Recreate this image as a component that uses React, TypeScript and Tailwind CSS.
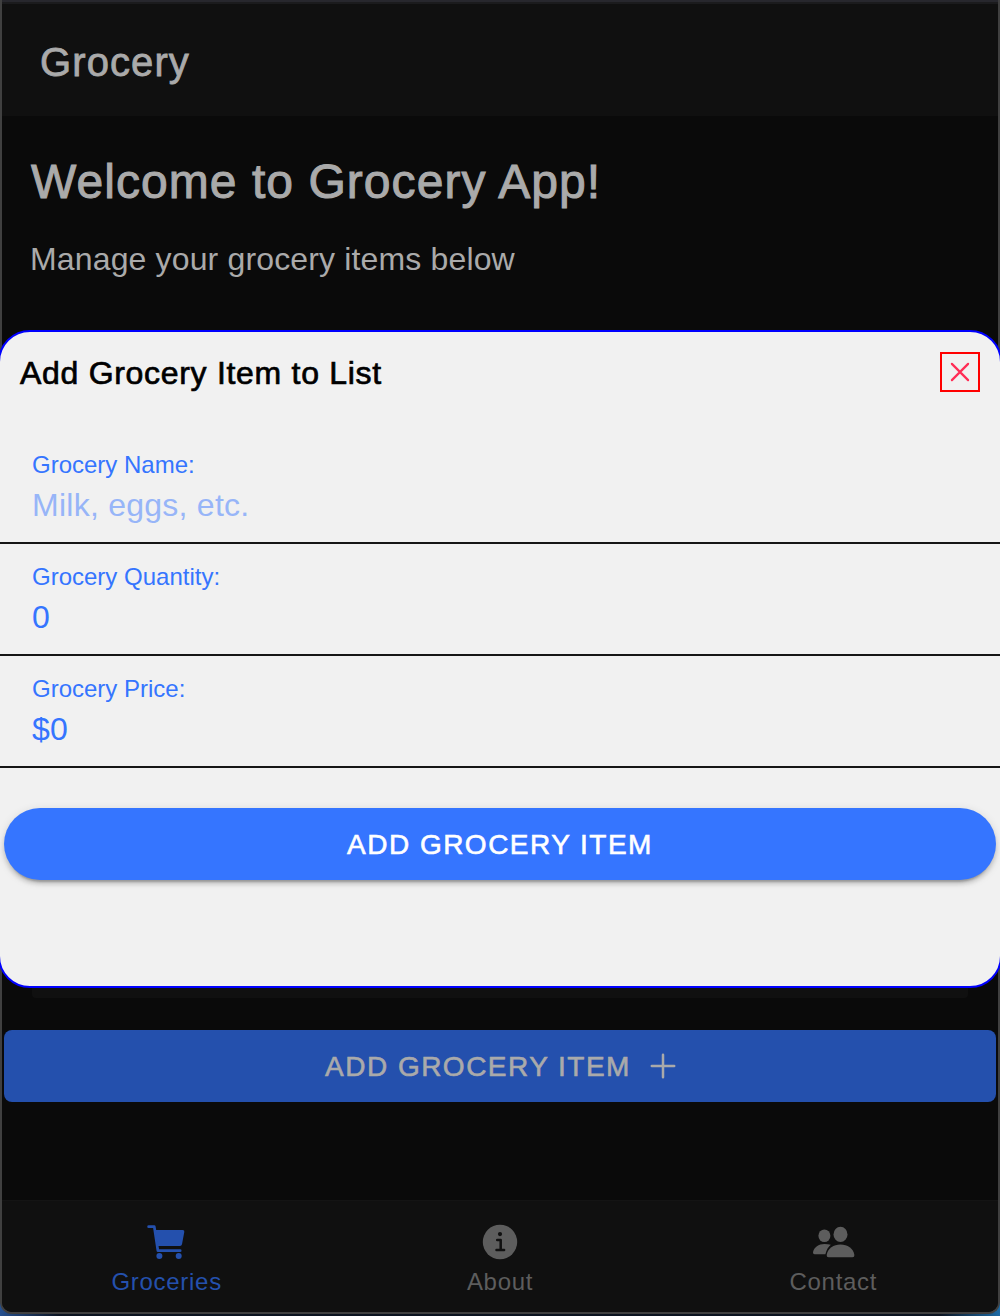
import React from "react";

function Field({ label, value, placeholder }: { label: string; value?: string; placeholder?: string }) {
  return (
    <label className="flex h-[112px] flex-col border-b-2 border-[#161616] pt-[19px] pl-8 text-[#3575ff]">
      <span className="h-[28px] text-[24px] leading-[28px]">{label}</span>
      <input
        className="mt-[5px] h-[42px] w-full bg-transparent p-0 text-[32px] leading-[42px] tracking-[0.25px] outline-none placeholder:text-[#97b5f8]"
        defaultValue={value}
        placeholder={placeholder}
      />
    </label>
  );
}

function CartIcon() {
  return (
    <svg width="44" height="44" viewBox="0 0 44 44" fill="currentColor">
      <path
        d="M3.6 6.7H9.3L12.9 30.7H35.2"
        fill="none"
        stroke="currentColor"
        strokeWidth="2.7"
        strokeLinecap="round"
        strokeLinejoin="round"
      />
      <path d="M9.8 10H37.7Q39.7 10 39.3 12L37 24.3Q36.6 26 35 26H13Z" />
      <circle cx="14.4" cy="35.9" r="3" />
      <circle cx="33.7" cy="35.9" r="3" />
    </svg>
  );
}

function InfoIcon() {
  return (
    <svg width="44" height="44" viewBox="0 0 44 44">
      <circle cx="22" cy="22" r="17.2" fill="currentColor" />
      <circle cx="22" cy="14.1" r="2.1" fill="#101010" />
      <path
        d="M19.2 19.9H22.7V29.9M18.5 29.9H26.1"
        fill="none"
        stroke="#101010"
        strokeWidth="2.5"
        strokeLinecap="round"
        strokeLinejoin="round"
      />
    </svg>
  );
}

function PeopleIcon() {
  return (
    <svg width="44" height="44" viewBox="0 0 44 44" fill="currentColor">
      <ellipse cx="13.4" cy="15.7" rx="6" ry="6.3" />
      <ellipse cx="29.5" cy="14.4" rx="7" ry="7.7" />
      <path d="M29.5 24.6C22.5 24.6 16.8 28.6 15.7 34.9Q15.5 37.3 17.5 37.3H41.5Q43.6 37.3 43.4 34.9C42.3 28.6 36.5 24.6 29.5 24.6Z" />
      <path d="M19.8 24.8C17.8 24.1 15.7 23.9 13.4 23.9C7.7 23.9 3 27.1 2 32.2Q1.8 34.3 3.7 34.3H14.4C15.4 29.8 17.4 26.9 19.8 24.8Z" />
    </svg>
  );
}

function Header() {
  return (
    <header className="flex h-[116px] items-center border-t-2 border-[#27272d] bg-[#101010] pt-[6px] pl-[38px] shadow-[inset_0_2px_0_#1b1b1d]">
      <span className="text-[40px] leading-[48px] tracking-[1.1px] [-webkit-text-stroke:0.8px_#aaaaaa]">Grocery</span>
    </header>
  );
}

function AddItemSheet() {
  return (
    <section className="absolute top-[330px] -left-[2px] h-[658px] w-[1004px] overflow-hidden rounded-[32px] border-2 border-[#0000ff] bg-[#f1f1f1]">
      <div className="flex h-[80px] items-center justify-between px-[20px]">
        <h2 className="pt-[2px] text-[32px] leading-[40px] tracking-[0.7px] text-black [-webkit-text-stroke:0.7px_#000]">
          Add Grocery Item to List
        </h2>
        <button className="flex size-[40px] items-center justify-center border-2 border-[#ff0000] text-[#ff2d55]">
          <svg width="36" height="36" viewBox="0 0 36 36">
            <path d="M9.9 9.9L26.1 26.1M26.1 9.9L9.9 26.1" stroke="currentColor" strokeWidth="2.2" strokeLinecap="round" />
          </svg>
        </button>
      </div>
      <div className="mt-[20px]">
        <Field label="Grocery Name:" placeholder="Milk, eggs, etc." />
        <Field label="Grocery Quantity:" value="0" />
        <Field label="Grocery Price:" value="$0" />
      </div>
      <button className="mx-[4px] mt-[40px] flex h-[72px] w-[992px] items-center justify-center rounded-full bg-[#3575ff] pt-[2px] text-[28px] tracking-[1.48px] text-white shadow-[0_6px_2px_-4px_rgba(0,0,0,0.2),0_4px_4px_0_rgba(0,0,0,0.14),0_2px_10px_0_rgba(0,0,0,0.12)] [-webkit-text-stroke:0.6px_#fff]">
        ADD GROCERY ITEM
      </button>
    </section>
  );
}

function Tab({ icon, label, color }: { icon: React.ReactNode; label: string; color: string }) {
  return (
    <div className={`flex flex-1 flex-col items-center pt-[19px] ${color}`}>
      {icon}
      <span className="mt-[2px] text-[24px] leading-[32px] tracking-[0.7px]">{label}</span>
    </div>
  );
}

export default function App() {
  return (
    <div className="relative h-[1316px] w-[1000px] overflow-hidden bg-[linear-gradient(90deg,#26508f,#0b1320_6%,#0b1320_94%,#1c6aa5)] font-['Liberation_Sans',Arial,sans-serif] text-[#aaaaaa]">
      <div className="flex h-[1314px] flex-col overflow-hidden rounded-b-[12px] border-x-2 border-b-2 border-[#404040] bg-[#0a0a0a]">
        <Header />
        <main className="flex flex-1 flex-col">
          <h1 className="mt-[37px] pl-[29px] text-[48px] leading-[58px] tracking-[1.05px] [-webkit-text-stroke:1px_#aaaaaa]">
            Welcome to Grocery App!
          </h1>
          <p className="mt-[28px] pl-[28px] text-[32px] leading-[40px] tracking-[0.15px]">
            Manage your grocery items below
          </p>
          <div className="mx-[30px] mt-[51px] h-[668px] shrink-0 rounded-[4px] bg-[#101010]" />
          <button className="mx-[2px] mt-[32px] flex h-[72px] items-center justify-center rounded-[8px] bg-[#2450ad] text-[28px] tracking-[1.48px] [-webkit-text-stroke:0.6px_#aaaaaa]">
            <span className="pt-[2px]">ADD GROCERY ITEM</span>
            <svg className="mr-[-8px] ml-[12px]" width="40" height="40" viewBox="0 0 40 40">
              <path d="M20 8.8V31.2M8.8 20H31.2" stroke="currentColor" strokeWidth="2.5" strokeLinecap="round" />
            </svg>
          </button>
        </main>
        <nav className="-mx-[2px] flex h-[112px] shrink-0 border-t border-[#141414] bg-[#101010]">
          <Tab icon={<CartIcon />} label="Groceries" color="text-[#2450ad]" />
          <Tab icon={<InfoIcon />} label="About" color="text-[#5d5d5d]" />
          <Tab icon={<PeopleIcon />} label="Contact" color="text-[#5d5d5d]" />
        </nav>
      </div>
      <AddItemSheet />
    </div>
  );
}
